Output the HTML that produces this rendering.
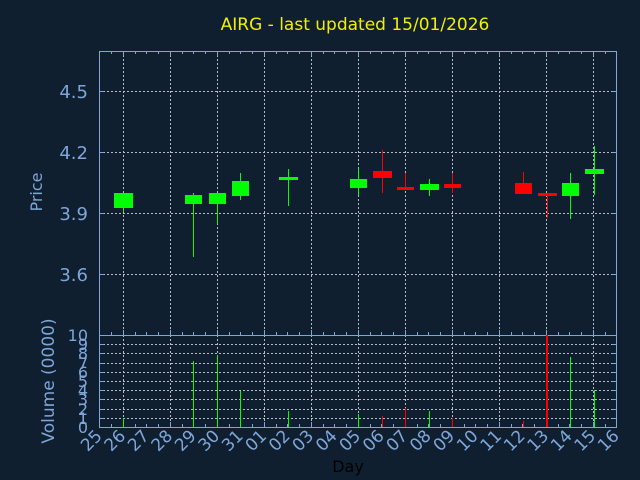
<!DOCTYPE html>
<html><head><meta charset="utf-8"><style>
html,body{margin:0;padding:0;background:#0f1f30;}
svg{display:block;font-family:"DejaVu Sans","Liberation Sans",sans-serif;}
</style></head><body>
<svg width="640" height="480" viewBox="0 0 640 480" xmlns="http://www.w3.org/2000/svg">
<rect width="640" height="480" fill="#0f1f30"/>
<text x="355" y="30" fill="#f0f000" font-size="17" text-anchor="middle">AIRG - last updated 15/01/2026</text>
<g stroke="#b8bcc4" stroke-width="1" stroke-dasharray="2,2" fill="none">
<path d="M123.5 51V427M170.5 51V427M217.5 51V427M264.5 51V427M311.5 51V427M358.5 51V427M405.5 51V427M452.5 51V427M499.5 51V427M546.5 51V427M593.5 51V427"/>
<path d="M99 91.5H617M99 152.5H617M99 213.5H617M99 274.5H617"/>
<path d="M99 344.5H617M99 353.5H617M99 363.5H617M99 372.5H617M99 381.5H617M99 390.5H617M99 399.5H617M99 409.5H617M99 418.5H617"/>
</g>
<g stroke="#7ea6d8" stroke-width="1" fill="none">
<rect x="99.5" y="51.5" width="517" height="376"/>
<path d="M99 335.5H617"/>
<path d="M99 91.5h5M99 152.5h5M99 213.5h5M99 274.5h5M617 91.5h-5M617 152.5h-5M617 213.5h-5M617 274.5h-5"/>
<path d="M99 344.5h5M99 353.5h5M99 363.5h5M99 372.5h5M99 381.5h5M99 390.5h5M99 399.5h5M99 409.5h5M99 418.5h5M617 344.5h-5M617 353.5h-5M617 363.5h-5M617 372.5h-5M617 381.5h-5M617 390.5h-5M617 399.5h-5M617 409.5h-5M617 418.5h-5"/>
<path d="M111.5 51v3M123.5 51v5M135.5 51v3M146.5 51v3M158.5 51v3M170.5 51v5M182.5 51v3M193.5 51v3M205.5 51v3M217.5 51v5M229.5 51v3M240.5 51v3M252.5 51v3M264.5 51v5M276.5 51v3M287.5 51v3M299.5 51v3M311.5 51v5M323.5 51v3M334.5 51v3M346.5 51v3M358.5 51v5M370.5 51v3M381.5 51v3M393.5 51v3M405.5 51v5M417.5 51v3M428.5 51v3M440.5 51v3M452.5 51v5M464.5 51v3M475.5 51v3M487.5 51v3M499.5 51v5M511.5 51v3M522.5 51v3M534.5 51v3M546.5 51v5M558.5 51v3M569.5 51v3M581.5 51v3M593.5 51v5M605.5 51v3"/>
<path d="M111.5 427v-3M123.5 427v-5M135.5 427v-3M146.5 427v-3M158.5 427v-3M170.5 427v-5M182.5 427v-3M193.5 427v-3M205.5 427v-3M217.5 427v-5M229.5 427v-3M240.5 427v-3M252.5 427v-3M264.5 427v-5M276.5 427v-3M287.5 427v-3M299.5 427v-3M311.5 427v-5M323.5 427v-3M334.5 427v-3M346.5 427v-3M358.5 427v-5M370.5 427v-3M381.5 427v-3M393.5 427v-3M405.5 427v-5M417.5 427v-3M428.5 427v-3M440.5 427v-3M452.5 427v-5M464.5 427v-3M475.5 427v-3M487.5 427v-3M499.5 427v-5M511.5 427v-3M522.5 427v-3M534.5 427v-3M546.5 427v-5M558.5 427v-3M569.5 427v-3M581.5 427v-3M593.5 427v-5M605.5 427v-3"/>
<path d="M111.5 335v-3M123.5 335v-5M135.5 335v-3M146.5 335v-3M158.5 335v-3M170.5 335v-5M182.5 335v-3M193.5 335v-3M205.5 335v-3M217.5 335v-5M229.5 335v-3M240.5 335v-3M252.5 335v-3M264.5 335v-5M276.5 335v-3M287.5 335v-3M299.5 335v-3M311.5 335v-5M323.5 335v-3M334.5 335v-3M346.5 335v-3M358.5 335v-5M370.5 335v-3M381.5 335v-3M393.5 335v-3M405.5 335v-5M417.5 335v-3M428.5 335v-3M440.5 335v-3M452.5 335v-5M464.5 335v-3M475.5 335v-3M487.5 335v-3M499.5 335v-5M511.5 335v-3M522.5 335v-3M534.5 335v-3M546.5 335v-5M558.5 335v-3M569.5 335v-3M581.5 335v-3M593.5 335v-5M605.5 335v-3"/>
</g>
<g fill="#7ea6d8" font-size="18" text-anchor="end">
<text x="88" y="98">4.5</text><text x="88" y="159">4.2</text><text x="88" y="220">3.9</text><text x="88" y="281">3.6</text>
</g>
<g fill="#7ea6d8" font-size="16" text-anchor="end">
<text x="88" y="341">10</text><text x="88" y="350">9</text><text x="88" y="359">8</text><text x="88" y="369">7</text><text x="88" y="378">6</text><text x="88" y="387">5</text><text x="88" y="396">4</text><text x="88" y="405">3</text><text x="88" y="415">2</text><text x="88" y="424">1</text><text x="88" y="433">0</text>
</g>
<text transform="translate(42,192) rotate(-90)" fill="#7ea6d8" font-size="16" text-anchor="middle">Price</text>
<text transform="translate(54,381) rotate(-90)" fill="#7ea6d8" font-size="17" text-anchor="middle">Volume (0000)</text>
<text x="348" y="472" fill="#000" font-size="16" text-anchor="middle">Day</text>
<g fill="#7ea6d8" font-size="17" text-anchor="end">
<text transform="translate(103,437) rotate(-45)">25</text>
<text transform="translate(126.5,437) rotate(-45)">26</text>
<text transform="translate(150,437) rotate(-45)">27</text>
<text transform="translate(173.5,437) rotate(-45)">28</text>
<text transform="translate(197,437) rotate(-45)">29</text>
<text transform="translate(220.5,437) rotate(-45)">30</text>
<text transform="translate(244,437) rotate(-45)">31</text>
<text transform="translate(267.5,437) rotate(-45)">01</text>
<text transform="translate(291,437) rotate(-45)">02</text>
<text transform="translate(314.5,437) rotate(-45)">03</text>
<text transform="translate(338,437) rotate(-45)">04</text>
<text transform="translate(361.5,437) rotate(-45)">05</text>
<text transform="translate(385,437) rotate(-45)">06</text>
<text transform="translate(408.5,437) rotate(-45)">07</text>
<text transform="translate(432,437) rotate(-45)">08</text>
<text transform="translate(455.5,437) rotate(-45)">09</text>
<text transform="translate(479,437) rotate(-45)">10</text>
<text transform="translate(502.5,437) rotate(-45)">11</text>
<text transform="translate(526,437) rotate(-45)">12</text>
<text transform="translate(549.5,437) rotate(-45)">13</text>
<text transform="translate(573,437) rotate(-45)">14</text>
<text transform="translate(596.5,437) rotate(-45)">15</text>
<text transform="translate(620,437) rotate(-45)">16</text>
</g>
<g stroke="#00ff00" stroke-width="1">
<path d="M123.5 193V212M193.5 193V257M217.5 193V224M240.5 173V200M288.5 169V206M358.5 169V195M429.5 179V196M570.5 173V219M594.5 146V195"/>
</g>
<g fill="#00ff00">
<rect x="114" y="193" width="19" height="15"/>
<rect x="185" y="195" width="17" height="9"/>
<rect x="209" y="193" width="17" height="11"/>
<rect x="232" y="181" width="17" height="15"/>
<rect x="279" y="177" width="19" height="3"/>
<rect x="350" y="179" width="17" height="9"/>
<rect x="420" y="184" width="19" height="6"/>
<rect x="562" y="183" width="17" height="13"/>
<rect x="585" y="169" width="19" height="5"/>
</g>
<g stroke="#ff0000" stroke-width="1">
<path d="M382.5 150V193M405.5 173V190M452.5 173V193M523.5 172V194M547.5 193V218"/>
</g>
<g fill="#ff0000">
<rect x="373" y="171" width="19" height="7"/>
<rect x="397" y="187" width="17" height="3"/>
<rect x="444" y="184" width="17" height="4"/>
<rect x="515" y="183" width="17" height="11"/>
<rect x="538" y="193" width="19" height="3"/>
</g>
<g stroke="#00ff00" stroke-width="1">
<path d="M123.5 418V427M193.5 361V427M217.5 355V427M240.5 391V427M288.5 411V427M358.5 414V427M429.5 411V427M570.5 357V427M594.5 390V427"/>
</g>
<g stroke="#ff0000">
<path d="M382.5 416V427M405.5 408V427M452.5 418V427M523.5 421V427" stroke-width="1"/>
<path d="M547 335V427" stroke-width="2"/>
</g>
</svg>
</body></html>
